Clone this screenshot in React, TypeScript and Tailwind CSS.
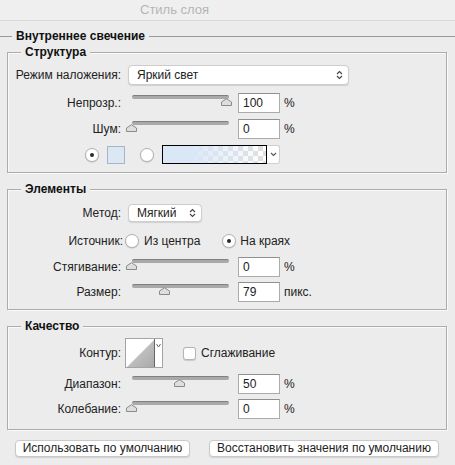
import React from 'react'

const font = "font-['Liberation_Sans',Arial,sans-serif]"

function Thumb() {
  return (
    <svg width="11" height="8" viewBox="0 0 11 8">
      <path d="M0.5 7.5V4L5.5 0.7L10.5 4V7.5Z" fill="#dedede" stroke="#8a8a8a" strokeLinejoin="round" />
    </svg>
  )
}

function Slider({ value }: { value: number }) {
  return (
    <div className="relative h-[20px] w-[110px] shrink-0">
      <div className="absolute left-[8px] top-[2px] h-[4px] w-[97px] rounded-full border-t border-[#7f7f7f] bg-[#a9a9a9]" />
      <div className="absolute top-[5px]" style={{ left: 7 + value * 95 - 5 }}>
        <Thumb />
      </div>
    </div>
  )
}

function Field({ value }: { value: string }) {
  return (
    <div className="flex h-[20px] w-[42px] shrink-0 items-center border border-[#ababab] border-t-[#8f8f8f] bg-white pl-[4px] text-[12px] text-[#222]">
      {value}
    </div>
  )
}

function Label({ children, w = 'w-[113px]' }: { children: React.ReactNode; w?: string }) {
  return <div className={`${w} shrink-0 text-right text-[12px] text-[#222]`}>{children}</div>
}

function Updown() {
  return (
    <svg width="7" height="10" viewBox="0 0 7 10">
      <path d="M1 4L3.5 1.5L6 4M1 6L3.5 8.5L6 6" fill="none" stroke="#444" strokeWidth="1.1" />
    </svg>
  )
}

function Radio({ on }: { on?: boolean }) {
  return (
    <div className="flex h-[14px] w-[14px] shrink-0 items-center justify-center rounded-full border border-[#b4b4b4] bg-white shadow-[0_0.5px_1px_rgba(0,0,0,0.2)]">
      {on && <div className="h-[4px] w-[4px] rounded-full bg-[#2a2a2a]" />}
    </div>
  )
}

function SliderRow({ label, value, pos, unit = '%', cls = '' }: { label: string; value: string; pos: number; unit?: string; cls?: string }) {
  return (
    <div className={`flex h-[20px] items-center ${cls}`}>
      <Label>{label}</Label>
      <div className="ml-[3px]">
        <Slider value={pos} />
      </div>
      <div className="ml-[4px]">
        <Field value={value} />
      </div>
      <span className="ml-[4px] text-[12px] text-[#222]">{unit}</span>
    </div>
  )
}

function Group({ title, children, cls }: { title: string; children: React.ReactNode; cls: string }) {
  return (
    <div className={`relative ml-[7px] w-[440px] border border-[#acacac] shadow-[inset_1px_1px_0_#f9f9f9,1px_1px_0_#f9f9f9] ${cls}`}>
      <span className="absolute left-[13px] top-[-9px] bg-[#ececec] px-[4px] text-[12px] font-bold leading-[16px] text-[#111]">
        {title}
      </span>
      {children}
    </div>
  )
}

export default function App() {
  return (
    <div className={`h-[465px] w-[455px] overflow-hidden bg-[#ececec] ${font}`}>
      <div className="flex h-[21px] items-center border-b border-[#d8d8d8] bg-[#efefef] pl-[140px] text-[13px] text-[#b5b5b5]">
        Стиль слоя
      </div>

      <div className="mt-[7px] flex h-[16px] items-center">
        <div className="h-px w-[12px] bg-[#9a9a9a]" />
        <span className="px-[4px] text-[12px] font-bold text-[#111]">Внутреннее свечение</span>
        <div className="h-px flex-1 bg-[#9a9a9a]" />
      </div>

      <Group title="Структура" cls="mt-[8px] h-[121px] pt-[12px]">
        <div className="flex h-[20px] items-center">
          <Label>Режим наложения:</Label>
          <div className="ml-[7px] flex h-[20px] w-[221px] items-center justify-between rounded-[4px] border border-[#cdcdcd] bg-white pl-[8px] pr-[5px] text-[12px] text-[#222] shadow-[0_1px_1px_rgba(0,0,0,0.12)]">
            Яркий свет
            <Updown />
          </div>
        </div>
        <SliderRow label="Непрозр.:" value="100" pos={1} cls="mt-[8px]" />
        <SliderRow label="Шум:" value="0" pos={0} cls="mt-[6px]" />
        <div className="mt-[6px] flex h-[19px] items-center">
          <div className="ml-[77px]">
            <Radio on />
          </div>
          <div className="ml-[8px] h-[18px] w-[18px] border border-[#a9b5c2] bg-[#dbe7f4]" />
          <div className="ml-[15px]">
            <Radio />
          </div>
          <div className="ml-[8px] h-[19px] w-[105px] border border-black bg-[linear-gradient(90deg,#d9e7f7_0%,#d9e7f7_25%,rgba(217,231,247,0)_100%),repeating-conic-gradient(#dfdfdf_0%_25%,#ffffff_0%_50%)] bg-[length:100%_100%,10px_10px]" />
          <div className="flex h-[19px] w-[13px] items-center justify-center rounded-r-[3px] border border-l-0 border-[#cfcfcf] bg-white">
            <svg width="7" height="5" viewBox="0 0 7 5">
              <path d="M1 1L3.5 3.5L6 1" fill="none" stroke="#555" strokeWidth="1.1" />
            </svg>
          </div>
        </div>
      </Group>

      <Group title="Элементы" cls="mt-[16px] h-[121px] pt-[14px]">
        <div className="flex h-[18px] items-center">
          <Label>Метод:</Label>
          <div className="ml-[7px] flex h-[18px] w-[74px] items-center justify-between rounded-[4px] border border-[#cdcdcd] bg-white pl-[8px] pr-[5px] text-[12px] text-[#222] shadow-[0_1px_1px_rgba(0,0,0,0.12)]">
            Мягкий
            <Updown />
          </div>
        </div>
        <div className="mt-[10px] flex h-[18px] items-center text-[12px] text-[#222]">
          <Label w="w-[115px]">Источник:</Label>
          <div className="ml-[2px]">
            <Radio />
          </div>
          <span className="ml-[5px]">Из центра</span>
          <div className="ml-[22px]">
            <Radio on />
          </div>
          <span className="ml-[4px]">На краях</span>
        </div>
        <SliderRow label="Стягивание:" value="0" pos={0} cls="mt-[7px]" />
        <SliderRow label="Размер:" value="79" pos={0.35} unit="пикс." cls="mt-[5px]" />
      </Group>

      <Group title="Качество" cls="mt-[16px] h-[104px] pt-[11px]">
        <div className="flex h-[30px] items-center">
          <Label>Контур:</Label>
          <div className="ml-[4px] flex h-[30px] w-[38px] border border-[#a4a4a4] bg-white">
            <svg width="28" height="28" viewBox="0 0 28 28" className="shrink-0">
              <defs>
                <linearGradient id="cg" x1="0" y1="0" x2="1" y2="1">
                  <stop offset="0" stopColor="#d4d4d4" />
                  <stop offset="1" stopColor="#a9a9a9" />
                </linearGradient>
              </defs>
              <path d="M1 28L28 1V28Z" fill="url(#cg)" />
            </svg>
            <div className="flex flex-1 justify-center border-l border-[#666] pt-[4px]">
              <svg width="5" height="5" viewBox="0 0 5 5">
                <path d="M0.5 1L2.5 4L4.5 1" fill="none" stroke="#555" strokeWidth="0.9" />
              </svg>
            </div>
          </div>
          <div className="ml-[20px] h-[13px] w-[13px] rounded-[3px] border border-[#b4b4b4] bg-white shadow-[0_0.5px_1px_rgba(0,0,0,0.15)]" />
          <span className="ml-[5px] text-[12px] text-[#222]">Сглаживание</span>
        </div>
        <SliderRow label="Диапазон:" value="50" pos={0.5} cls="mt-[6px]" />
        <SliderRow label="Колебание:" value="0" pos={0} cls="mt-[5px]" />
      </Group>

      <div className="mt-[10px] flex items-center">
        <button className="ml-[15px] h-[17px] w-[175px] rounded-[4px] border border-[#c9c9c9] bg-white text-[12px] leading-[15px] text-[#222] shadow-[0_1px_1px_rgba(0,0,0,0.12)]">
          Использовать по умолчанию
        </button>
        <button className="ml-[19px] h-[17px] w-[230px] rounded-[4px] border border-[#c9c9c9] bg-white text-[12px] leading-[15px] text-[#222] shadow-[0_1px_1px_rgba(0,0,0,0.12)]">
          Восстановить значения по умолчанию
        </button>
      </div>
    </div>
  )
}
